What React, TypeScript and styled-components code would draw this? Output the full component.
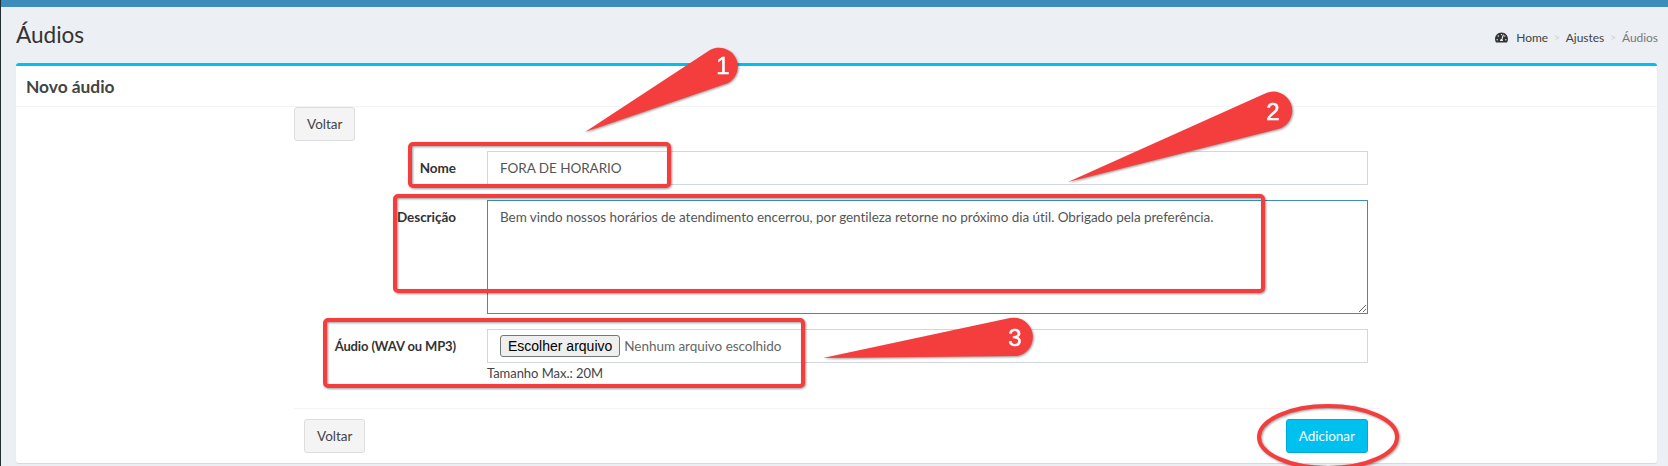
import styled, { createGlobalStyle } from 'styled-components';
import { FaTachometerAlt } from 'react-icons/fa';

const GlobalStyle = createGlobalStyle`
    html, body {
        margin: 0;
        padding: 0;
        background: #ecf0f5;
        font-family: "Lato", "Liberation Sans", sans-serif;
        font-size: 13.5px;
        letter-spacing: -0.04px;
        color: #333;
    }
    * {
        box-sizing: border-box;
    }
`;

const Page = styled.div`
    position: relative;
    width: 1668px;
    height: 466px;
    overflow: hidden;
    border-left: 1px solid #222d32;
    background: #ecf0f5;
`;

const TopBar = styled.div`
    height: 7px;
    background: #3c8dbc;
`;

const ContentHeader = styled.div`
    display: flex;
    justify-content: space-between;
    align-items: center;
    height: 56px;
    padding: 0 10px 0 15px;
`;

const Title = styled.h1`
    margin: 0 0 2px;
    font-size: 22.6px;
    font-weight: 400;
    color: #333;
`;

const Breadcrumb = styled.ol`
    display: flex;
    align-items: center;
    gap: 6px;
    margin: 4px 0 0;
    padding: 0;
    list-style: none;
    font-size: 12px;
`;

const Crumb = styled.li<{ $active?: boolean }>`
    display: flex;
    align-items: center;
    gap: 8px;
    color: ${({ $active }) => ($active ? '#777' : '#444')};
`;

const Separator = styled.li`
    color: #ccc;
    font-size: 10px;
`;

const Box = styled.section`
    height: 400px;
    margin: 0 11px 0 15px;
    border-top: 3px solid #00c0ef;
    border-radius: 3px;
    background: #fff;
    box-shadow: 0 1px 1px rgba(0, 0, 0, 0.1);
`;

const BoxHeader = styled.div`
    display: flex;
    align-items: center;
    height: 41px;
    padding-left: 10px;
    border-bottom: 1px solid #f4f4f4;
`;

const BoxTitle = styled.h3`
    margin: 0;
    font-size: 17.4px;
    font-weight: 700;
    color: #444;
`;

const FormArea = styled.form`
    width: 1085px;
    margin-left: 278px;
`;

const Button = styled.button<{ $primary?: boolean }>`
    height: 34px;
    padding: 0 12px;
    border: 1px solid ${({ $primary }) => ($primary ? '#00acd6' : '#ddd')};
    border-radius: 3px;
    background: ${({ $primary }) => ($primary ? '#00c0ef' : '#f4f4f4')};
    color: ${({ $primary }) => ($primary ? '#fff' : '#444')};
    font: inherit;
`;

const Fields = styled.div`
    display: flex;
    flex-direction: column;
    gap: 15px;
    margin-top: 10px;
    height: 258px;
    border-bottom: 1px solid #f4f4f4;
`;

const FieldRow = styled.div`
    display: grid;
    grid-template-columns: 178px 1fr;
`;

const Label = styled.label<{ $condensed?: boolean }>`
    padding: 7px 16px 0 0;
    font-size: ${({ $condensed }) => ($condensed ? '13px' : 'inherit')};
    font-weight: 700;
    letter-spacing: ${({ $condensed }) => ($condensed ? '-0.12px' : 'inherit')};
    line-height: 20px;
    text-align: right;
    color: #333;
`;

const FieldCell = styled.div`
    padding: 0 11px 0 15px;
`;

const TextInput = styled.input`
    display: block;
    width: 100%;
    height: 34px;
    padding: 6px 12px;
    border: 1px solid #d2d6de;
    color: #555;
    font: inherit;
    letter-spacing: inherit;
    outline: none;
`;

const TextArea = styled.textarea`
    display: block;
    width: 100%;
    height: 114px;
    padding: 6px 12px;
    border: 1px solid #3c8dbc;
    color: #555;
    font: inherit;
    letter-spacing: inherit;
    line-height: 20px;
    outline: none;
`;

const FileBox = styled.div`
    display: flex;
    align-items: center;
    gap: 4px;
    height: 34px;
    padding: 0 12px;
    border: 1px solid #d2d6de;
    color: #666;
`;

const FileButton = styled.button`
    height: 22px;
    padding: 0 7px;
    border: 1px solid #767676;
    border-radius: 3px;
    background: #efefef;
    color: #000;
    font-family: "Liberation Sans", sans-serif;
    font-size: 14px;
    letter-spacing: 0;
`;

const HelpText = styled.div`
    font-size: 13px;
    line-height: 20px;
    color: #444;
`;

const Footer = styled.div`
    display: flex;
    justify-content: space-between;
    padding: 10px 11px 0 10px;
`;

const Annotations = styled.svg`
    position: absolute;
    top: 0;
    left: -1px;
    filter: drop-shadow(1px 1px 1px rgba(0, 0, 0, 0.4));
    pointer-events: none;
`;

const RedFrame = styled.rect`
    fill: none;
    stroke: #f43e3e;
    stroke-width: 4;
`;

const RedOval = styled.ellipse`
    fill: none;
    stroke: #f43e3e;
    stroke-width: 4;
`;

const Pointer = styled.path`
    fill: #f43e3e;
`;

const PointerNumber = styled.text`
    fill: #fff;
    stroke: #fff;
    stroke-width: 0.5;
    font-family: "Liberation Sans", sans-serif;
    font-size: 24px;
    text-anchor: middle;
    dominant-baseline: central;
`;

const frames = [
    { x: 410, y: 144, width: 259, height: 42 },
    { x: 395, y: 196, width: 868, height: 95 },
    { x: 325, y: 320, width: 478, height: 66 },
];

const pointers = [
    { label: '1', d: 'M585 132 L710 50 A18 18 0 1 1 728 83 Z', x: 723, y: 65 },
    { label: '2', d: 'M1068 182 L1264 94 A19 19 0 1 1 1278 129 Z', x: 1273, y: 111 },
    { label: '3', d: 'M823 358 L1010 318 A19 19 0 1 1 1017 356 Z', x: 1015, y: 337 },
];

export default function App() {
    return (
        <>
            <GlobalStyle />
            <Page>
                <TopBar />
                <ContentHeader>
                    <Title>Áudios</Title>
                    <Breadcrumb>
                        <Crumb><FaTachometerAlt size={13} color="#333" /> Home</Crumb>
                        <Separator>&gt;</Separator>
                        <Crumb>Ajustes</Crumb>
                        <Separator>&gt;</Separator>
                        <Crumb $active>Áudios</Crumb>
                    </Breadcrumb>
                </ContentHeader>
                <Box>
                    <BoxHeader>
                        <BoxTitle>Novo áudio</BoxTitle>
                    </BoxHeader>
                    <FormArea>
                        <Button type="button">Voltar</Button>
                        <Fields>
                            <FieldRow>
                                <Label>Nome</Label>
                                <FieldCell>
                                    <TextInput defaultValue="FORA DE HORARIO" />
                                </FieldCell>
                            </FieldRow>
                            <FieldRow>
                                <Label>Descrição</Label>
                                <FieldCell>
                                    <TextArea defaultValue="Bem vindo nossos horários de atendimento encerrou, por gentileza retorne no próximo dia útil. Obrigado pela preferência." />
                                </FieldCell>
                            </FieldRow>
                            <FieldRow>
                                <Label $condensed>Áudio (WAV ou MP3)</Label>
                                <FieldCell>
                                    <FileBox>
                                        <FileButton type="button">Escolher arquivo</FileButton>
                                        <span>Nenhum arquivo escolhido</span>
                                    </FileBox>
                                    <HelpText>Tamanho Max.: 20M</HelpText>
                                </FieldCell>
                            </FieldRow>
                        </Fields>
                        <Footer>
                            <Button type="button">Voltar</Button>
                            <Button type="button" $primary>Adicionar</Button>
                        </Footer>
                    </FormArea>
                </Box>
                <Annotations width="1668" height="466" viewBox="0 0 1668 466">
                    {frames.map((frame) => (
                        <RedFrame key={frame.x} rx="3" {...frame} />
                    ))}
                    <RedOval cx="1328" cy="437" rx="69" ry="31" />
                    {pointers.map((pointer) => (
                        <g key={pointer.label}>
                            <Pointer d={pointer.d} />
                            <PointerNumber x={pointer.x} y={pointer.y}>{pointer.label}</PointerNumber>
                        </g>
                    ))}
                </Annotations>
            </Page>
        </>
    );
}
